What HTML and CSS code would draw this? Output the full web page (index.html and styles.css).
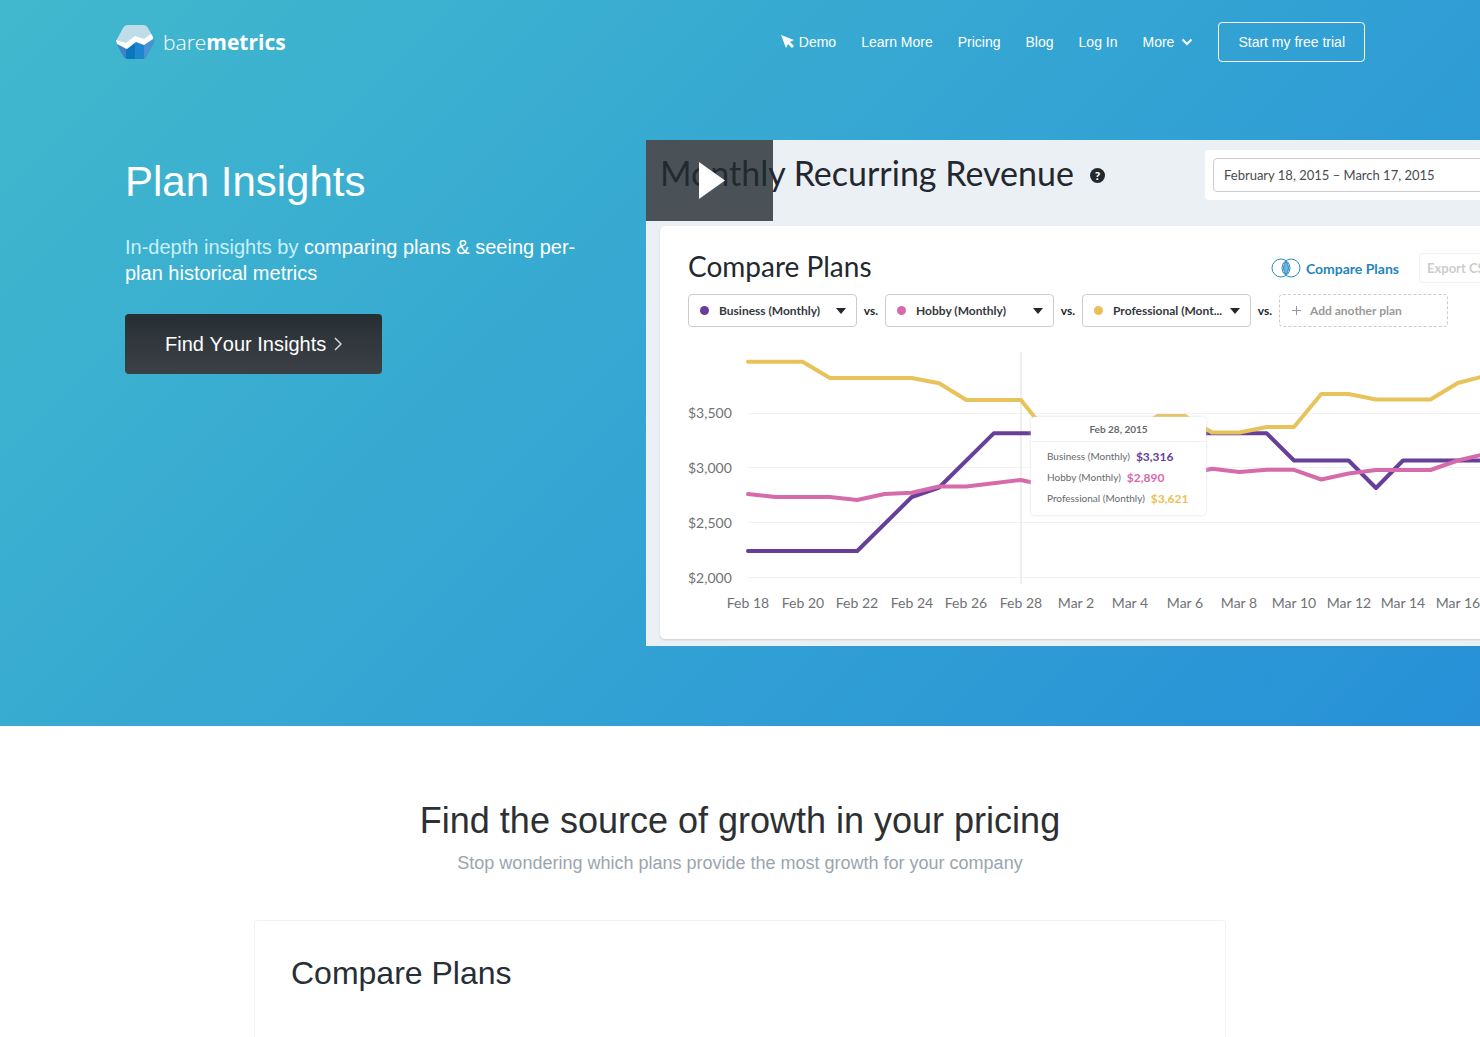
FILE: index.html
```html
<!DOCTYPE html>
<html lang="en">
<head>
<meta charset="utf-8">
<meta name="viewport" content="width=device-width, initial-scale=1">
<title>Plan Insights - Baremetrics</title>
<link rel="stylesheet" href="styles.css">
</head>
<body>
<div class="hero">
  <header class="site-header">
    <a class="logo" href="#">
      <svg class="logo-mark" viewBox="0 0 40 36" aria-hidden="true">
        <path d="M1 17L8 4q1.500-3 5-3h15q3.500 0 5 3l5 9-10 8-8-4-9 8z" fill="#bfdde8"/>
        <path d="M1 18l10 7 9-8v18h-7q-3.500 0-5-3z" fill="#3f84c8"/>
        <path d="M11 23l9-7v19h-8l-1-1z" fill="#0877bd"/>
        <path d="M20 15l10 4v15l-2 1h-8z" fill="#1e86cd"/>
        <path d="M29 19l10-4q1 2 0 4l-7 13q-1 2-3 3z" fill="#4a93d3"/>
        <path d="M1 16l10 3 9-7 9 3 7-5 2 3v2l-9 6-8-3-9 7-10-5z" fill="#fff"/>
      </svg>
      <span class="logo-text">bare<b>metrics</b></span>
    </a>
    <nav class="nav">
      <a class="nav-demo" href="#">
        <svg width="14" height="14" viewBox="0 0 14 14" aria-hidden="true"><path d="M0 0l13 5-4 2 4 4-2 2-4-4-2 4z" fill="#fff"/></svg>
        Demo
      </a>
      <a href="#">Learn More</a>
      <a href="#">Pricing</a>
      <a href="#">Blog</a>
      <a href="#">Log In</a>
      <button class="nav-more" type="button">More
        <svg width="12" height="8" viewBox="0 0 12 8" aria-hidden="true"><path d="M1.500 1.500L6 6l4.500-4.500" fill="none" stroke="#fff" stroke-width="2"/></svg>
      </button>
      <a class="trial" href="#">Start my free trial</a>
    </nav>
  </header>

  <div class="hero-body">
    <div class="intro">
      <h1>Plan Insights</h1>
      <p>In-depth insights by <strong>comparing plans &amp; seeing per-plan historical metrics</strong></p>
      <a class="cta" href="#">Find Your Insights
        <svg width="8" height="14" viewBox="0 0 8 14" aria-hidden="true"><path d="M1 1l6 6-6 6" fill="none" stroke="#d5d8da" stroke-width="1.500"/></svg>
      </a>
    </div>

    <div class="demo">
      <div class="demo-top">
        <h2>Monthly Recurring Revenue</h2>
        <span class="help">?</span>
        <div class="date-box"><input type="text" aria-label="Date range" value="February 18, 2015 – March 17, 2015" readonly></div>
      </div>
      <div class="panel">
        <div class="panel-head">
          <h3>Compare Plans</h3>
          <a class="compare" href="#">
            <svg width="30" height="20" viewBox="0 0 30 20" fill="none" stroke="#2b8cc4" aria-hidden="true">
              <path d="M15 3q5 7 0 14-5-7 0-14z" fill="#6fb3dc"/>
              <circle cx="10" cy="10" r="9"/><circle cx="20" cy="10" r="9"/>
            </svg>
            Compare Plans
          </a>
          <button class="export" type="button">Export CSV</button>
        </div>
        <div class="filters">
          <div class="plan business"><select aria-label="First plan"><option>Business (Monthly)</option></select></div>
          <span>vs.</span>
          <div class="plan hobby"><select aria-label="Second plan"><option>Hobby (Monthly)</option></select></div>
          <span>vs.</span>
          <div class="plan professional"><select aria-label="Third plan"><option>Professional (Mont...</option></select></div>
          <span>vs.</span>
          <button class="add-plan" type="button"><svg width="9" height="9" viewBox="0 0 9 9" stroke="#999" aria-hidden="true"><path d="M4.500 0v9M0 4.500h9"/></svg>Add another plan</button>
        </div>
        <div class="chart">
          <svg class="plot" width="844" height="270" viewBox="0 0 844 270" role="img" aria-label="Revenue by plan">
            <g stroke="#f2f2f2"><path d="M60 68.500h784M60 122.500h784M60 177.500h784M60 232.500h784"/></g>
            <path d="M333 7v232" stroke="#e9e9ea" stroke-width="1.500"/>
            <g fill="none" stroke-width="4" stroke-linecap="round" stroke-linejoin="round">
              <path stroke="#673f98" d="M60 206H169.200L223.800 152L251.100 142.500L305.700 88.300H578.700L606 115.500H660.600L688 143L715 115.500H797"/>
              <path stroke="#d66bac" d="M60 149L87.300 152H141.900L169.200 155L196.500 149L223.800 147.700L251.100 141.500H278.400L333 135L360 141L496.800 130L524 123.700L551.400 127L578.700 124.800H606L633.300 134.500L660.600 128.500L688 125H742.500L769.800 115.500L797 109"/>
              <path stroke="#e8c35c" d="M60 16.700H114.600L141.900 33H223.800L251.100 38.300L278.400 55H333L360 89H442L469.500 71H496.800L524 87.500H551.400L578.700 82H606L633.300 49H660.600L688 54.500H742.500L769.800 38L797 31"/>
            </g>
            <g class="axis">
              <text x="0" y="73">$3,500</text><text x="0" y="128">$3,000</text><text x="0" y="183">$2,500</text><text x="0" y="238">$2,000</text>
            </g>
            <g class="axis dates">
              <text x="60" y="263">Feb 18</text><text x="115" y="263">Feb 20</text><text x="169" y="263">Feb 22</text><text x="224" y="263">Feb 24</text><text x="278" y="263">Feb 26</text><text x="333" y="263">Feb 28</text><text x="388" y="263">Mar 2</text><text x="442" y="263">Mar 4</text><text x="497" y="263">Mar 6</text><text x="551" y="263">Mar 8</text><text x="606" y="263">Mar 10</text><text x="661" y="263">Mar 12</text><text x="715" y="263">Mar 14</text><text x="770" y="263">Mar 16</text>
            </g>
          </svg>
          <div class="tip">
            <div class="tip-date">Feb 28, 2015</div>
            <ul>
              <li>Business (Monthly) <b class="c-business">$3,316</b></li>
              <li>Hobby (Monthly) <b class="c-hobby">$2,890</b></li>
              <li>Professional (Monthly) <b class="c-professional">$3,621</b></li>
            </ul>
          </div>
        </div>
      </div>
      <button class="play" type="button" aria-label="Play video"><svg width="26" height="37" viewBox="0 0 26 37" aria-hidden="true"><path d="M0 0l26 18.500L0 37z" fill="#fff"/></svg></button>
    </div>
  </div>
</div>

<main class="growth">
  <h2>Find the source of growth in your pricing</h2>
  <p>Stop wondering which plans provide the most growth for your company</p>
  <section class="card"><h3>Compare Plans</h3></section>
</main>
</body>
</html>
```
FILE: styles.css
```css
* { box-sizing: border-box; }
body { margin: 0; font-family: "Liberation Sans", Arial, sans-serif; font-kerning: none; color: #2d3033; background: #fff; overflow-x: hidden; }
h1, h2, h3, p, ul { margin: 0; padding: 0; font-weight: 400; }
a { color: inherit; text-decoration: none; }
button, input, select { font: inherit; color: inherit; margin: 0; }
svg { display: block; flex: none; }

.hero { background: linear-gradient(135deg, #41b8cd 0%, #34a5d3 50%, #2790d7 100%); color: #fff; padding-bottom: 80px; overflow: hidden; }
.site-header { max-width: 1250px; margin: 0 auto; padding-top: 22px; display: flex; align-items: center; justify-content: space-between; }
.logo { display: flex; align-items: center; gap: 8px; }
.logo-mark { width: 40px; height: 36px; }
.logo-text { font: 300 21px/36px "Open Sans", sans-serif; }
.logo-text b { font-weight: 700; }
.nav { display: flex; align-items: center; gap: 25px; font-size: 14px; line-height: 16px; }
.nav-demo { display: flex; align-items: center; gap: 4px; }
.nav-more { display: flex; align-items: center; gap: 7px; padding: 0; border: 0; background: none; }
.trial { padding: 11px 19px; border: 1px solid #fff; border-radius: 4px; }

.hero-body { max-width: 1250px; margin: 78px auto 0; padding-left: 10px; display: grid; grid-template-columns: 461px 900px; gap: 60px; }
.intro { padding-top: 18px; }
.intro h1 { font-size: 42px; line-height: 48px; }
.intro p { margin-top: 28px; font-size: 20px; line-height: 26px; color: #c8f0f8; }
.intro strong { font-weight: 400; color: #fff; }
.cta { display: inline-flex; align-items: center; gap: 8px; margin-top: 28px; padding: 0 40px; font-size: 20px; line-height: 60px; border-radius: 4px; background: linear-gradient(#262e34, #3c4147); }

.demo { position: relative; height: 506px; padding: 10px 14px 0; background: #ebf0f5; color: #22282d; font-family: Lato, sans-serif; font-kerning: auto; }
.demo-top { display: flex; align-items: center; height: 50px; }
.demo-top h2 { padding-bottom: 4px; font-size: 34px; line-height: 44px; }
.help { width: 15px; height: 15px; margin-left: 16px; border-radius: 50%; background: #22282d; color: #fff; font-size: 12px; line-height: 15px; font-weight: 900; text-align: center; }
.date-box { width: 327px; margin-left: auto; padding: 8px; border-radius: 4px; background: #fff; }
.date-box input { display: block; width: 100%; height: 34px; padding: 0 10px; border: 1px solid #ccc; border-radius: 4px; background: #fff; color: #484b4f; font-size: 13px; }
.panel { height: 413px; margin-top: 26px; padding: 26px 28px 0; border-radius: 5px; background: #fff; box-shadow: 0 1px 2px #c9ced3; }
.panel-head { display: flex; align-items: center; height: 32px; }
.panel-head h3 { padding-bottom: 4px; font-size: 28px; line-height: 32px; }
.compare { display: flex; align-items: center; gap: 5px; margin-left: auto; color: #2484bd; font-size: 14px; font-weight: 700; }
.export { width: 85px; height: 30px; margin-left: 20px; padding: 0 7px; border: 1px solid #f3f3f3; border-radius: 4px; background: #fff; color: #ccc; font-size: 13px; font-weight: 700; text-align: left; }
.filters { display: flex; align-items: center; margin-top: 10px; font-size: 12px; font-weight: 700; }
.filters > span { width: 28px; text-align: center; }
.plan { position: relative; width: 169px; }
.plan select { display: block; appearance: none; width: 100%; height: 33px; padding: 0 26px 0 30px; border: 1px solid #ccc; border-radius: 4px; background: #fff; color: #35393d; }
.plan::before { content: ""; position: absolute; left: 12px; top: 12px; width: 9px; height: 9px; border-radius: 50%; background: #673f98; }
.plan::after { content: ""; position: absolute; right: 11px; top: 14px; border: 5px solid transparent; border-top: 6px solid #22282d; border-bottom: 0; }
.plan.hobby::before { background: #d66bac; }
.plan.professional::before { background: #eabf58; }
.add-plan { display: flex; align-items: center; gap: 9px; width: 169px; height: 33px; padding: 0 12px; border: 1px dashed #ccc; border-radius: 4px; background: #fff; color: #999; }
.chart { position: relative; margin-top: 18px; }
.axis { font-size: 14px; fill: #707275; }
.dates { text-anchor: middle; }
.tip { position: absolute; left: 343px; top: 72px; width: 175px; height: 98px; border-radius: 4px; background: #fff; box-shadow: 0 0 3px #d3dae0; color: #66696d; font-size: 10px; }
.tip-date { height: 25px; border-bottom: 1px solid #f0f1f2; line-height: 24px; font-weight: 700; text-align: center; }
.tip ul { padding: 4px 16px; list-style: none; line-height: 21px; white-space: nowrap; }
.tip li { display: flex; gap: 6px; height: 21px; }
.tip b { font-size: 12px; }
.c-business { color: #673f98; }
.c-hobby { color: #d66bac; }
.c-professional { color: #eabf58; }
.play { position: absolute; left: 0; top: 0; display: flex; align-items: center; justify-content: center; width: 127px; height: 81px; padding: 0 0 0 5px; border: 0; background: rgba(34, 42, 49, .8); }

.growth { padding: 72px 24px 0; text-align: center; }
.growth h2 { font-size: 36px; line-height: 46px; }
.growth p { margin-top: 8px; font-size: 18px; line-height: 22px; color: #9aa5b0; }
.card { max-width: 972px; min-height: 117px; margin: 46px auto 0; padding: 34px 36px; border: 1px solid #edf4f8; border-bottom: 0; border-radius: 4px 4px 0 0; text-align: left; }
.card h3 { font-size: 32px; line-height: 36px; color: #262e36; }
```
